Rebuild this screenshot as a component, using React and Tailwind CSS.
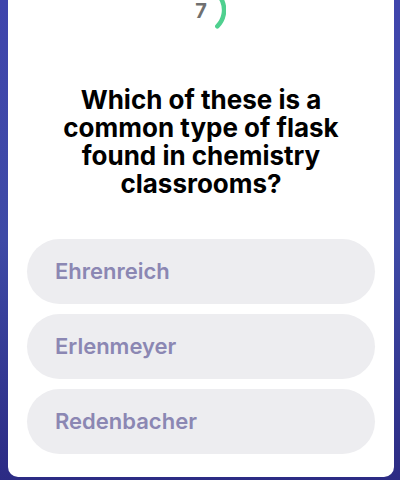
import React from 'react';

const options = ['Ehrenreich', 'Erlenmeyer', 'Redenbacher'];

const Timer = ({ seconds }) => (
  <div className="relative -mt-[15px] mx-auto w-[50px] h-[50px]">
    <svg width="50" height="50" viewBox="0 0 50 50" className="absolute inset-0">
      <path d="M25 2 A23 23 0 0 1 41.3 41.3" fill="none" stroke="#4fd08f" strokeWidth="4.5" strokeLinecap="round" />
    </svg>
    <span className="absolute inset-0 flex items-center justify-center pt-[2px] text-[20px] font-bold text-[#707070]">
      {seconds}
    </span>
  </div>
);

const App = () => {
  return (
    <div
      className="w-[400px] h-[480px] overflow-hidden pl-[8px] pr-[6px] bg-gradient-to-b from-[#3f45ac] via-[#3e4aa6] to-[#2c2b84]"
      style={{ fontFamily: 'Inter, "Noto Sans", sans-serif' }}
    >
      <div className="bg-white rounded-b-[10px] h-[477px] flex flex-col px-[19px]">
        <Timer seconds={7} />
        <h1 className="mt-[51px] text-center text-[26px] leading-[28px] font-bold text-black px-[20px]">
          Which of these is a common type of flask found in chemistry classrooms?
        </h1>
        <div className="mt-[41px] flex flex-col gap-[10px]">
          {options.map((opt) => (
            <button
              key={opt}
              className="h-[65px] rounded-full bg-[#ededf0] text-left pl-[28px] text-[22px] font-semibold text-[#8b87b3]"
            >
              {opt}
            </button>
          ))}
        </div>
      </div>
    </div>
  );
};

export default App;
